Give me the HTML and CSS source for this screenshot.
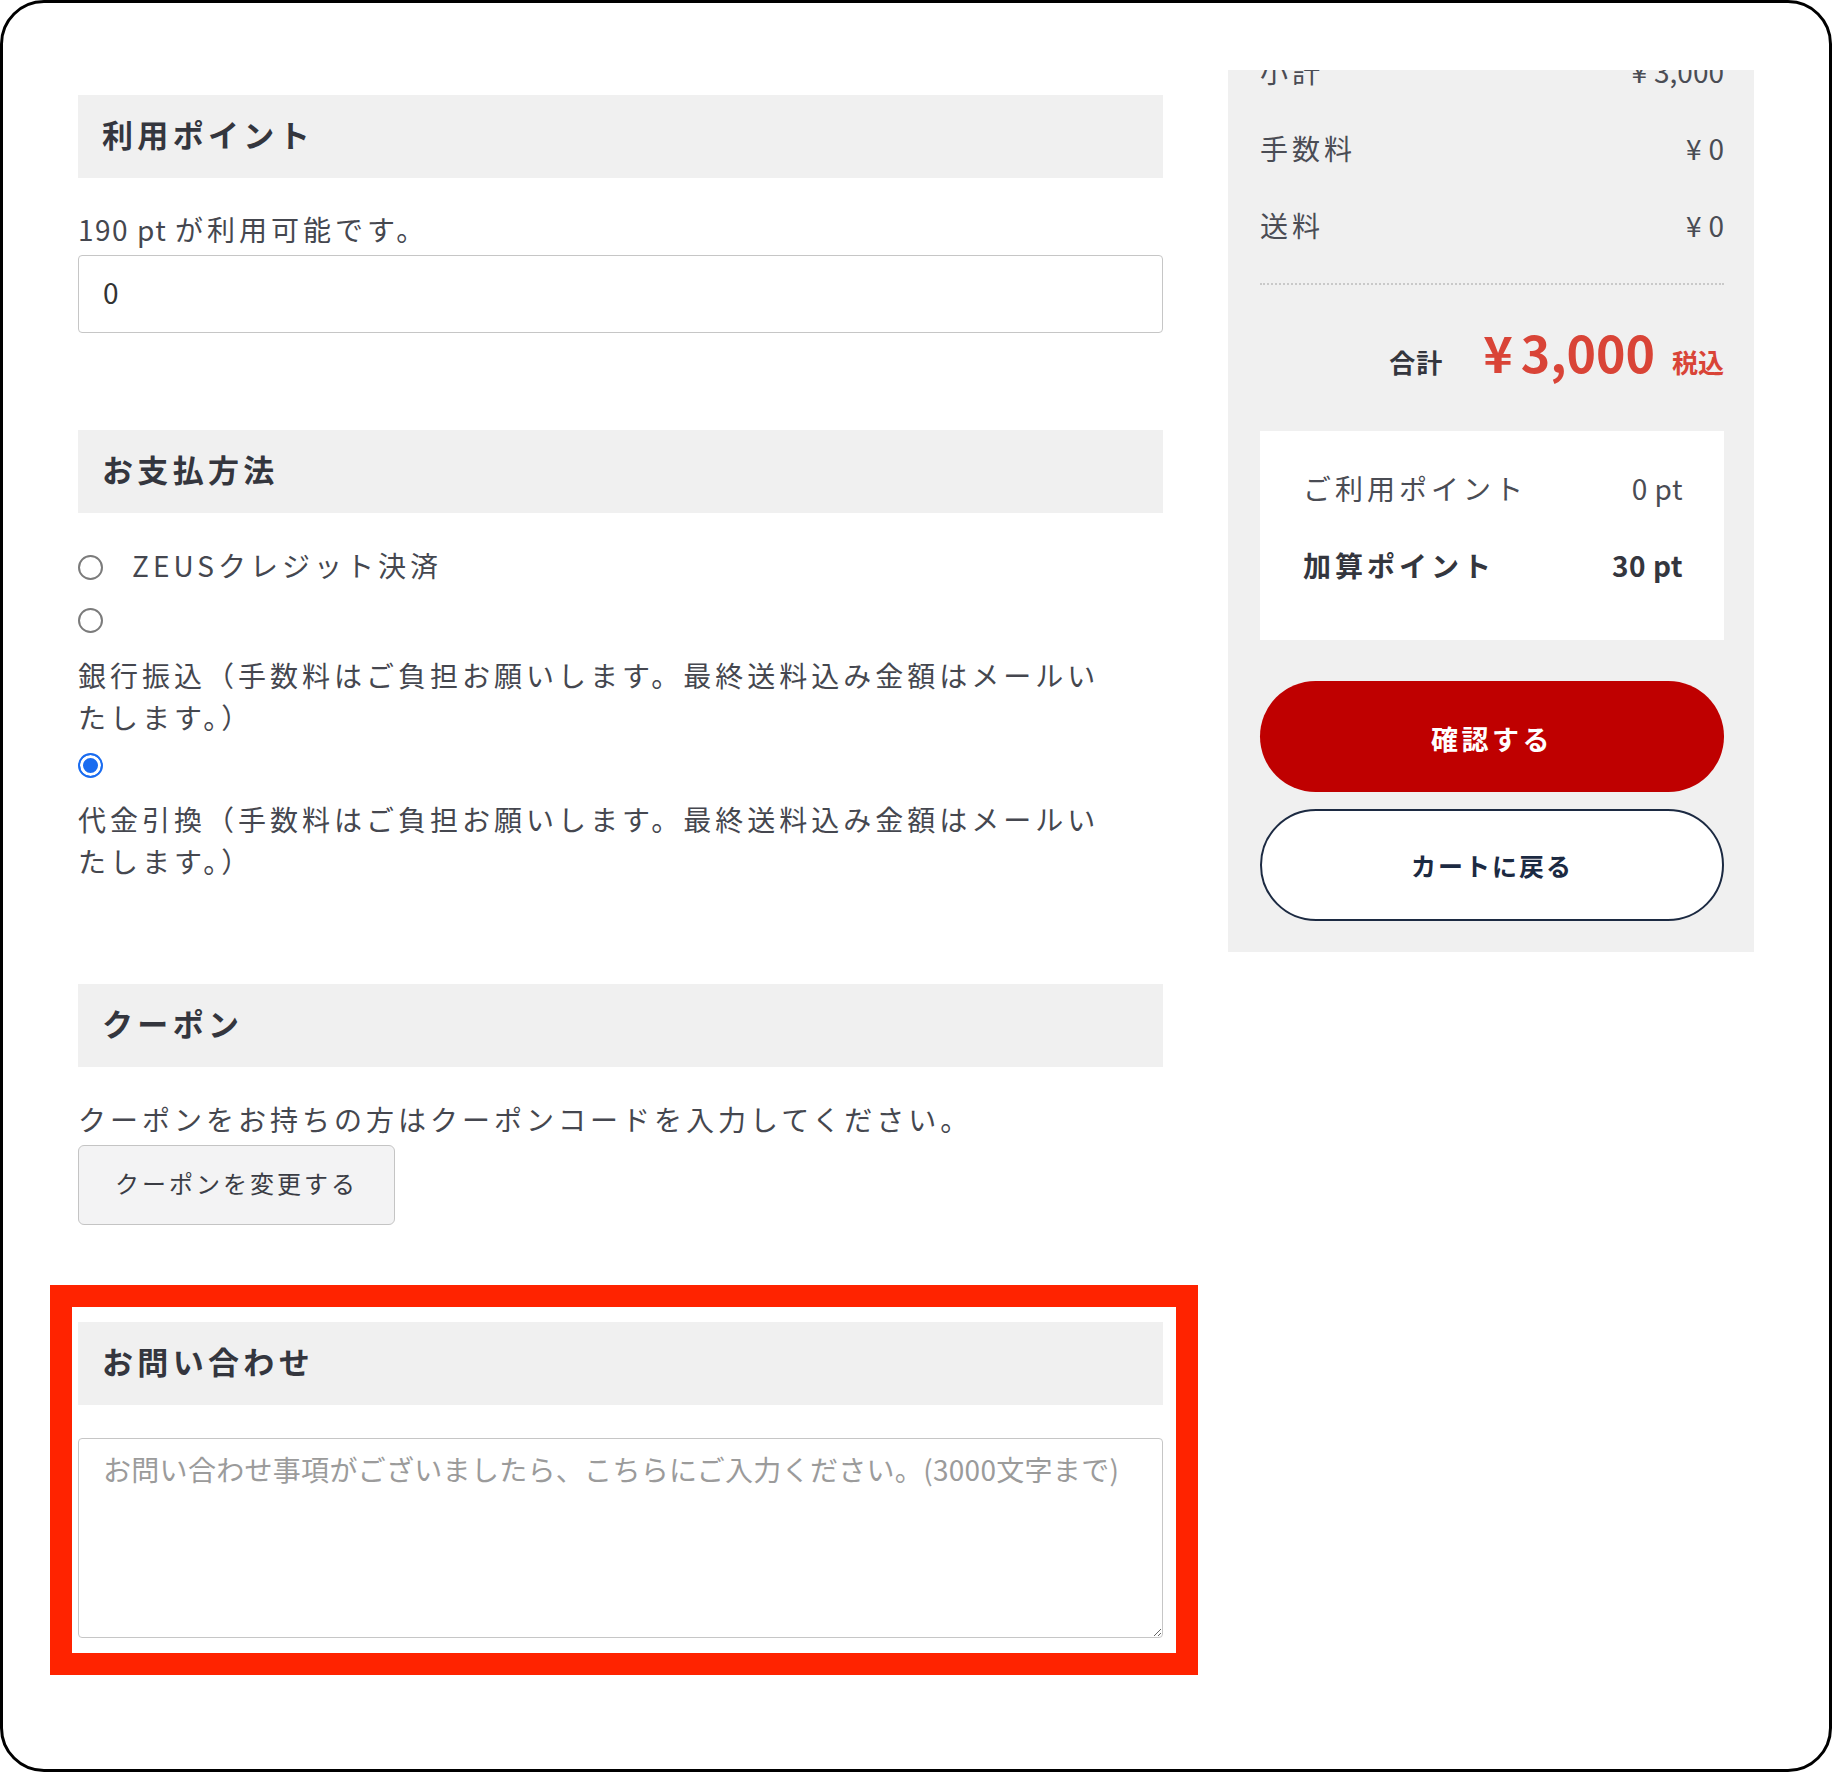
FILE: index.html
```html
<!DOCTYPE html>
<html lang="ja">
<head>
<meta charset="utf-8">
<title>ご注文手続き</title>
<link rel="stylesheet" href="styles.css">
</head>
<body>
<div class="frame">
  <div class="layout">
    <main class="main">
      <section class="sec sec-first">
        <h2 class="sec-title">利用ポイント</h2>
        <p class="note note-point"><span class="latin">190 pt </span>が利用可能です。</p>
        <input class="field" type="text" value="0">
      </section>

      <section class="sec sec-pay">
        <h2 class="sec-title">お支払方法</h2>
        <div class="opt opt-first">
          <input class="radio" type="radio" name="pay" id="p1">
          <label class="opt-inline-label" for="p1">ZEUSクレジット決済</label>
        </div>
        <div class="opt">
          <input class="radio" type="radio" name="pay" id="p2">
        </div>
        <label class="opt-label opt-label-a" for="p2">銀行振込（手数料はご負担お願いします。最終送料込み金額はメールいたします。）</label>
        <div class="opt opt-after">
          <input class="radio" type="radio" name="pay" id="p3" checked>
        </div>
        <label class="opt-label opt-label-b" for="p3">代金引換（手数料はご負担お願いします。最終送料込み金額はメールいたします。）</label>
      </section>

      <section class="sec sec-coupon">
        <h2 class="sec-title">クーポン</h2>
        <p class="note note-coupon">クーポンをお持ちの方はクーポンコードを入力してください。</p>
        <button class="btn-coupon" type="button">クーポンを変更する</button>
      </section>

      <section class="sec sec-contact">
        <h2 class="sec-title">お問い合わせ</h2>
        <textarea class="area" placeholder="お問い合わせ事項がございましたら、こちらにご入力ください。(3000文字まで)"></textarea>
        <div class="highlight"></div>
      </section>
    </main>

    <aside class="summary">
      <div class="summary-inner">
        <div class="row"><span class="row-label">小計</span><span class="row-val"><span class="yen">¥</span>3,000</span></div>
        <div class="row"><span class="row-label">手数料</span><span class="row-val"><span class="yen">¥</span>0</span></div>
        <div class="row"><span class="row-label">送料</span><span class="row-val"><span class="yen">¥</span>0</span></div>
        <div class="divider"></div>
        <div class="total">
          <span class="total-label">合計</span>
          <span class="total-price"><span class="total-yen">¥</span>3,000</span>
          <span class="total-tax">税込</span>
        </div>
        <div class="points">
          <div class="prow"><span>ご利用ポイント</span><span class="pval">0 pt</span></div>
          <div class="prow prow-bold"><span>加算ポイント</span><span class="pval">30 pt</span></div>
        </div>
        <button class="btn btn-primary" type="button">確認する</button>
        <button class="btn btn-outline" type="button">カートに戻る</button>
      </div>
    </aside>
  </div>
</div>
</body>
</html>
```

FILE: styles.css
```css
* {
  box-sizing: border-box;
}

html, body {
  margin: 0;
  padding: 0;
  background: #ffffff;
}

body {
  font-family: "Noto Sans CJK JP", "Noto Sans", sans-serif;
  color: #45474f;
}

.frame {
  width: 1832px;
  height: 1772px;
  border: 3px solid #000;
  border-radius: 44px;
  overflow: hidden;
  background: #fff;
}

.layout {
  display: flex;
  align-items: flex-start;
  gap: 65px;
  padding: 67px 0 0 75px;
}

.main {
  width: 1085px;
  margin-top: 25px;
}

.sec {
  position: relative;
}

.sec-pay,
.sec-contact {
  margin-top: 97px;
}

.sec-coupon {
  margin-top: 102px;
}

.sec-title {
  margin: 0;
  height: 83px;
  display: flex;
  align-items: center;
  padding: 0 0 7px 24px;
  background: #f0f0f0;
  font-size: 31px;
  font-weight: 700;
  letter-spacing: 0.14em;
  color: #34363e;
}

.note {
  margin: 0;
  font-size: 28px;
  line-height: 42px;
  letter-spacing: 4px;
  color: #45474f;
}

.latin {
  letter-spacing: 1.5px;
}

.note-point {
  margin-top: 30px;
  margin-bottom: 5px;
}

.note-coupon {
  margin-top: 31px;
  margin-bottom: 5px;
}

.field {
  display: block;
  width: 100%;
  height: 78px;
  border: 1px solid #c6c6c6;
  border-radius: 4px;
  padding: 0 24px 4px;
  font-family: inherit;
  font-size: 28px;
  color: #333;
  background: #fff;
}

.opt {
  height: 50px;
  display: flex;
  align-items: center;
}

.opt-first {
  margin-top: 29px;
  margin-bottom: 3px;
}

.opt-after {
  margin-top: 2px;
}

.radio {
  appearance: none;
  -webkit-appearance: none;
  width: 25px;
  height: 25px;
  margin: 0;
  border: 2px solid #7b7b7b;
  border-radius: 50%;
  background: #fff;
  flex: none;
}

.radio:checked {
  border-color: #1a6cf0;
  background: #1a6cf0;
  box-shadow: inset 0 0 0 3px #fff;
}

.opt-inline-label {
  margin-left: 29px;
  padding-bottom: 4px;
  font-size: 28px;
  line-height: 42px;
  letter-spacing: 4px;
}

.opt-label {
  display: block;
  width: 1040px;
  font-size: 28px;
  line-height: 42px;
  letter-spacing: 4px;
}

.opt-label-a {
  margin-top: 9px;
}

.opt-label-b {
  margin-top: 8px;
}

.btn-coupon {
  display: block;
  width: 317px;
  height: 80px;
  border: 1px solid #c4c4c4;
  border-radius: 6px;
  background: #f3f3f4;
  font-family: inherit;
  font-size: 24px;
  letter-spacing: 3px;
  color: #3a3c44;
  padding: 0 0 6px;
}

.area {
  display: block;
  width: 100%;
  height: 200px;
  margin-top: 33px;
  border: 1px solid #c6c6c6;
  border-radius: 4px;
  padding: 10px 24px;
  font-family: inherit;
  font-size: 28px;
  line-height: 40px;
  letter-spacing: 0.3px;
  color: #333;
  background: #fff;
}

.area::placeholder {
  color: #9b9b9b;
}

.highlight {
  position: absolute;
  left: -28px;
  top: -37px;
  width: 1148px;
  height: 390px;
  border: 22px solid #ff2300;
  pointer-events: none;
}

/* summary panel */
.summary {
  width: 526px;
  background: #f0f0f0;
  overflow: hidden;
  padding: 0 30px 31px 32px;
}

.summary-inner {
  margin-top: -38px;
}

.row {
  height: 77px;
  display: flex;
  align-items: center;
  justify-content: space-between;
  font-size: 28px;
  color: #4a4c54;
}

.row-label {
  letter-spacing: 4px;
}

.yen {
  margin-right: 7px;
}

.divider {
  margin-top: 20px;
  border-top: 2px dotted #c9c9c9;
}

.total {
  margin-top: 36px;
  height: 60px;
  display: flex;
  justify-content: flex-end;
  align-items: baseline;
  line-height: 60px;
}

.total-label {
  font-size: 26px;
  font-weight: 700;
  color: #34363e;
  letter-spacing: 1px;
}

.total-price {
  margin-left: 40px;
  font-size: 50px;
  font-weight: 700;
  color: #d94437;
}

.total-yen {
  margin-right: 8px;
}

.total-tax {
  margin-left: 17px;
  font-size: 26px;
  font-weight: 700;
  color: #d94437;
}

.points {
  margin-top: 50px;
  background: #fff;
  padding: 18px 41px 37px 43px;
}

.prow {
  height: 77px;
  display: flex;
  align-items: center;
  justify-content: space-between;
  font-size: 28px;
  letter-spacing: 4px;
  color: #4a4c54;
}

.prow-bold {
  font-weight: 700;
  color: #34363e;
}

.pval {
  letter-spacing: 0.5px;
}

.btn {
  display: flex;
  align-items: center;
  justify-content: center;
  width: 100%;
  font-family: inherit;
  font-weight: 700;
  padding: 0;
  cursor: pointer;
}

.btn-primary {
  margin-top: 41px;
  height: 111px;
  border: none;
  border-radius: 56px;
  background: #bf0000;
  color: #fff;
  font-size: 27px;
  letter-spacing: 3.5px;
  padding-top: 3px;
}

.btn-outline {
  margin-top: 17px;
  height: 112px;
  border: 2px solid #1c2a42;
  border-radius: 56px;
  background: #fff;
  color: #1c2a42;
  font-size: 25px;
  letter-spacing: 2px;
}
```
